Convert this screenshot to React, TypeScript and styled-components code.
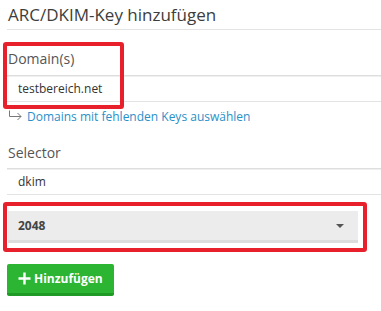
import { createGlobalStyle, styled } from 'styled-components';

const GlobalStyle = createGlobalStyle`
  html, body {
    margin: 0;
    padding: 0;
    background: #fff;
  }
  body {
    font-family: 'Open Sans', 'Noto Sans', sans-serif;
    color: #333;
  }
`;

export default function App() {
  return (
    <>
      <GlobalStyle />
      <Page>
        <Title>ARC/DKIM-Key hinzufügen</Title>

        <Label>Domain(s)</Label>
        <TextInput readOnly value="testbereich.net" />
        <HelperLink href="#">
          <ArrowIcon width="15" height="11" viewBox="0 0 15 11">
            <path d="M1.5 0.5V6.5H13M9.5 3L13 6.5L9.5 10" fill="none" stroke="#777" strokeWidth="1" />
          </ArrowIcon>
          Domains mit fehlenden Keys auswählen
        </HelperLink>

        <Label $spaced>Selector</Label>
        <TextInput readOnly value="dkim" />

        <Select>
          <span>2048</span>
          <Caret />
        </Select>

        <AddButton type="button">
          <PlusIcon width="13" height="13" viewBox="0 0 13 13">
            <path d="M6.5 0.5V12.5M0.5 6.5H12.5" stroke="#fff" strokeWidth="2.4" />
          </PlusIcon>
          Hinzufügen
        </AddButton>

        <Highlight style={{ left: 3, top: 42, width: 121, height: 67 }} />
        <Highlight style={{ left: 3, top: 202, width: 364, height: 50 }} />
      </Page>
    </>
  );
}

const Page = styled.div`
  position: relative;
  display: flex;
  flex-direction: column;
  align-items: flex-start;
  padding: 3px 0 0 7px;
  width: 381px;
  height: 311px;
  box-sizing: border-box;
  overflow: hidden;
`;

const Title = styled.h1`
  align-self: stretch;
  margin: 0;
  padding: 0 0 2px 1px;
  font-size: 17px;
  line-height: 24px;
  font-weight: 400;
  color: #3d3d3d;
  border-bottom: 1px solid #e3e3e3;
`;

const Label = styled.label<{ $spaced?: boolean }>`
  display: block;
  margin: ${({ $spaced }) => ($spaced ? '17px 0 5px 1px' : '19px 0 6px 1px')};
  font-size: 14px;
  line-height: 20px;
  color: #555;
`;

const TextInput = styled.input`
  align-self: stretch;
  box-sizing: border-box;
  height: 27px;
  margin: 0;
  padding: 0 0 0 11px;
  border: none;
  border-top: 1px solid #dedede;
  border-bottom: 1px solid #e3e3e3;
  box-shadow: inset 0 1px 0 #efefef;
  background: #fff;
  font-family: 'Open Sans', sans-serif;
  font-size: 12px;
  color: #333;
  outline: none;
`;

const HelperLink = styled.a`
  display: flex;
  align-items: center;
  gap: 4px;
  margin-top: 6px;
  font-size: 12px;
  line-height: 18px;
  color: #2a90c8;
  text-decoration: none;
`;

const ArrowIcon = styled.svg`
  margin: -4px 0 0 1px;
`;

const Select = styled.div`
  display: flex;
  align-items: center;
  justify-content: space-between;
  box-sizing: border-box;
  width: 350px;
  height: 32px;
  margin: 16px 0 0 1px;
  padding: 0 14px 0 10px;
  background: #ececec;
  border-bottom: 3px solid #dcdcdc;
  font-size: 12px;
  font-weight: 700;
  color: #444;
`;

const Caret = styled.span`
  width: 0;
  height: 0;
  border-left: 4px solid transparent;
  border-right: 4px solid transparent;
  border-top: 4px solid #555;
`;

const AddButton = styled.button`
  display: flex;
  align-items: center;
  gap: 3px;
  box-sizing: border-box;
  width: 107px;
  height: 32px;
  margin-top: 21px;
  padding: 0 0 0 11px;
  border: none;
  border-bottom: 3px solid #1f9a26;
  border-radius: 2px;
  background: #2bb532;
  font-family: 'Open Sans', sans-serif;
  font-size: 12px;
  font-weight: 700;
  color: #fff;
`;

const PlusIcon = styled.svg`
  flex: none;
`;

const Highlight = styled.div`
  position: absolute;
  box-sizing: border-box;
  border: 4px solid #e8202c;
  border-radius: 3px;
  pointer-events: none;
`;
